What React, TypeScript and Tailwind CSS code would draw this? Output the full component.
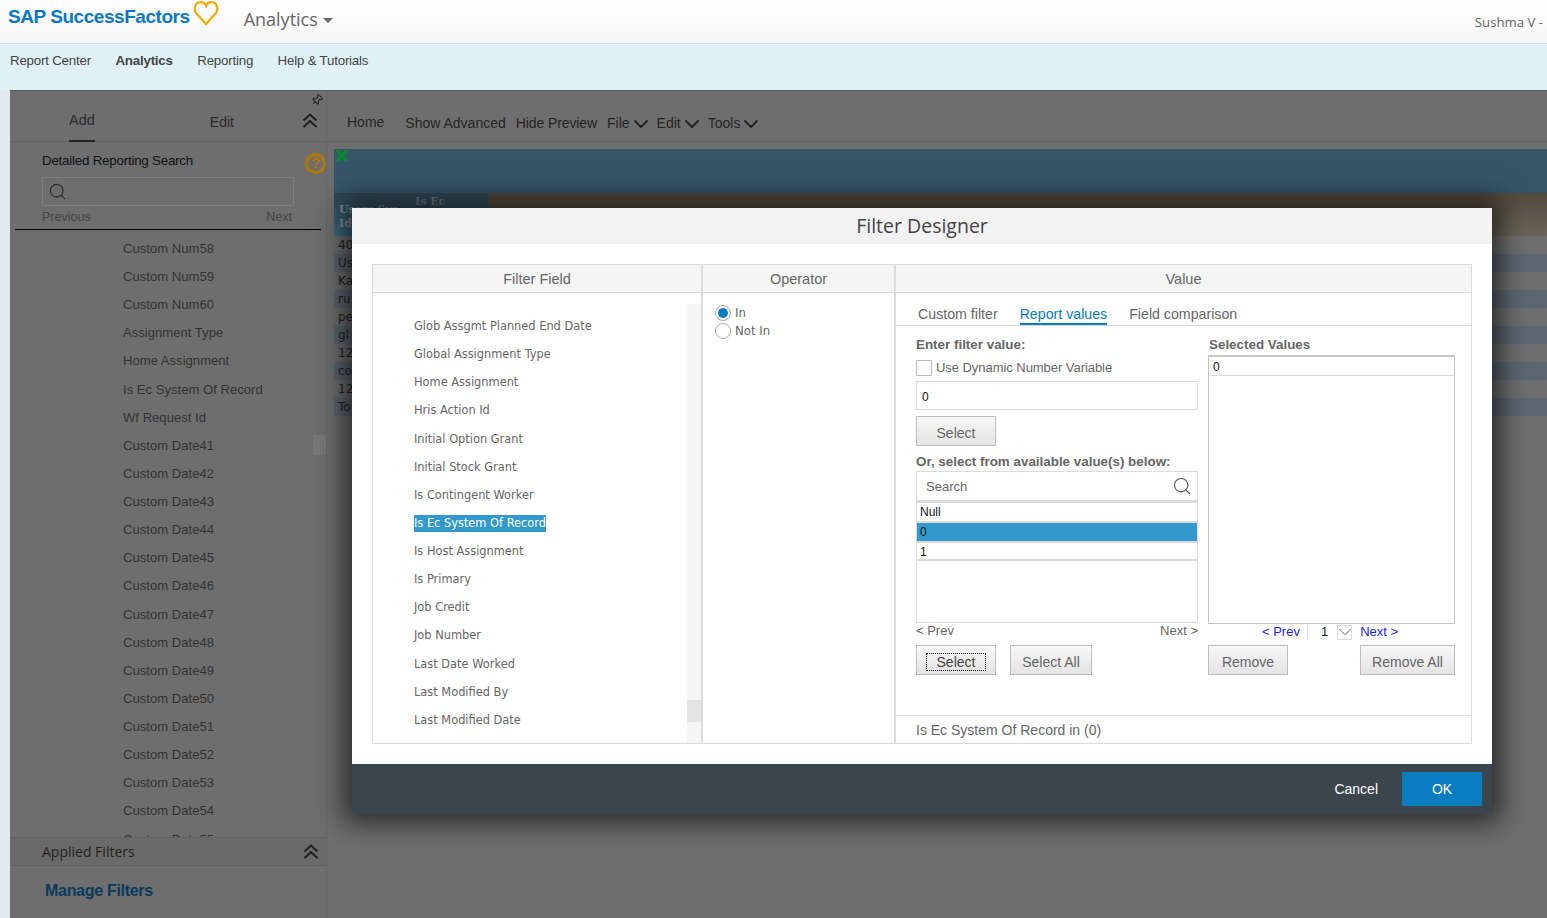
import React from "react";
import { Pin, ChevronDown, Search } from "lucide-react";

const sideFields = [
  "Custom Num58", "Custom Num59", "Custom Num60", "Assignment Type", "Home Assignment",
  "Is Ec System Of Record", "Wf Request Id", "Custom Date41", "Custom Date42", "Custom Date43",
  "Custom Date44", "Custom Date45", "Custom Date46", "Custom Date47", "Custom Date48",
  "Custom Date49", "Custom Date50", "Custom Date51", "Custom Date52", "Custom Date53",
  "Custom Date54", "Custom Date55",
];

const filterFields = [
  "Glob Assgmt Planned End Date", "Global Assignment Type", "Home Assignment", "Hris Action Id",
  "Initial Option Grant", "Initial Stock Grant", "Is Contingent Worker", "Is Ec System Of Record",
  "Is Host Assignment", "Is Primary", "Job Credit", "Job Number", "Last Date Worked",
  "Last Modified By", "Last Modified Date",
];

const rowStubs = ["40", "Us", "Ka", "ru", "pe", "gl", "12", "co", "12", "To"];

const DoubleUp = ({ className = "" }: { className?: string }) => (
  <svg viewBox="0 0 16 15" className={`h-[15px] w-[16px] ${className}`} fill="none" stroke="#1f1f1f" strokeWidth="2">
    <path d="M1.5 7.5 L8 1.5 L14.5 7.5" />
    <path d="M1.5 14 L8 8 L14.5 14" />
  </svg>
);

const GrayButton = ({ label, className = "", focused = false }: { label: string; className?: string; focused?: boolean }) => (
  <button
    className={`h-[30px] border border-[#bdbdbd] bg-gradient-to-b from-[#f7f7f7] to-[#e4e4e4] pt-[4px] text-[14px] leading-[16px] text-[#666] ${className}`}
  >
    {focused ? <span className="border border-dotted border-black px-[10px] text-[#444]">{label}</span> : label}
  </button>
);

const MenuItem = ({ label }: { label: string }) => (
  <span className="flex items-center">
    {label}
    <ChevronDown size={24} strokeWidth={1.8} className="-my-[4px] -ml-[1px] text-[#222]" />
  </span>
);

export default function App() {
  return (
    <div className="relative h-[918px] w-[1547px] overflow-hidden bg-[#e0eaf0] font-['Liberation_Sans',sans-serif]">
      <header className="flex h-[44px] items-center border-b border-[#dcdcdc] bg-gradient-to-b from-white to-[#f6f6f6] pl-[8px] pr-[4px]">
        <span className="mb-[8px] text-[19px] font-bold tracking-[-0.45px] text-[#0a77c5]">SAP SuccessFactors</span>
        <svg viewBox="0 0 26 26" className="mb-[17px] ml-[3px] h-[26px] w-[26px]" fill="none" stroke="#f0ab00" strokeWidth="2.2">
          <path d="M13 24 L3.5 13.5 C0 9 2 2.5 7.5 2.2 C10 2 12 3.5 13 6 C14 3.5 16 2 18.5 2.2 C24 2.5 26 9 22.5 13.5 Z" />
        </svg>
        <span className="ml-[25px] mb-[5px] font-['Open_Sans',sans-serif] text-[18px] text-[#666]">Analytics</span>
        <span className="mb-[3px] ml-[5px] h-0 w-0 border-x-[5px] border-t-[5px] border-x-transparent border-t-[#666]" />
        <span className="ml-auto mt-[3px] font-['Open_Sans',sans-serif] text-[13.2px] text-[#666]">Sushma V -</span>
      </header>

      <nav className="flex h-[46px] gap-[24.5px] bg-[#e0f1f5] pl-[10px] pt-[7px] text-[13.3px] tracking-[-0.2px] text-[#444]">
        <span>Report Center</span>
        <span className="font-bold">Analytics</span>
        <span>Reporting</span>
        <span>Help &amp; Tutorials</span>
      </nav>

      <main className="ml-[10px] flex h-[828px] border-t border-[#5a5a5a] bg-[#6e6e6e]">
        <aside className="flex w-[317px] shrink-0 flex-col border-r border-[#666]">
          <div className="relative flex h-[51px] border-b border-[#636363] text-[14px] text-[#2b2b2b]">
            <span className="ml-[59px] mt-[19px] h-[32px] border-b-2 border-[#222] text-[14.5px]">Add</span>
            <span className="ml-[115px] mt-[21px]">Edit</span>
            <Pin size={12} className="absolute right-[3px] top-[3px] rotate-45 text-[#222]" />
            <DoubleUp className="absolute right-[8px] top-[22px]" />
          </div>
          <div className="relative px-[32px] pt-[9px]">
            <div className="text-[13.3px] tracking-[-0.2px] text-[#111]">Detailed Reporting Search</div>
            <span className="absolute right-0 top-[11px] flex h-[21px] w-[21px] items-center justify-center rounded-full border-[3px] border-[#b37700] text-[15px] font-bold text-[#b37700]">?</span>
            <div className="mt-[6px] flex h-[29px] w-[252px] items-center border border-[#7d7d7d] pl-[5px]">
              <Search size={19} strokeWidth={1.5} className="text-[#2b2b2b]" />
            </div>
            <div className="mt-[2px] flex w-[250px] justify-between text-[12.5px] text-[#444]">
              <span>Previous</span>
              <span>Next</span>
            </div>
          </div>
          <div className="mx-[5px] mt-[2px] border-t border-black" />
          <div className="relative h-[607px] overflow-hidden pl-[113px] pt-[5px] text-[13.1px] text-[#333]">
            {sideFields.map((f, i) => (
              <div key={i} className="flex h-[28.14px] items-center">{f}</div>
            ))}
            <div className="absolute right-0 top-[205px] h-[20px] w-[13px] bg-[#777]" />
          </div>
          <div className="flex h-[29px] items-center justify-between border-y border-[#626262] bg-[#6a6a6a] pl-[32px] pr-[7px] font-['Open_Sans',sans-serif] text-[14px] text-[#222]">
            <span>Applied Filters</span>
            <DoubleUp />
          </div>
          <div className="pl-[35px] pt-[13px] text-[16px] font-bold tracking-[-0.3px] text-[#0a3a5c]">Manage Filters</div>
        </aside>

        <section className="flex min-w-0 flex-1 flex-col">
          <div className="flex h-[51px] items-end border-b border-[#636363] pb-[7px] pl-[20px] text-[14px] text-[#252525]">
            <span className="mb-[1px] mr-[21px]">Home</span>
            <span className="mr-[10px]">Show Advanced</span>
            <span className="mr-[10px] tracking-[-0.1px]">Hide Preview</span>
            <span className="mr-[4px]"><MenuItem label="File" /></span>
            <span className="mr-[4px]"><MenuItem label="Edit" /></span>
            <MenuItem label="Tools" />
          </div>
          <div className="ml-[7px] mt-[7px]">
            <div className="h-[44px] bg-[#365568] p-[1px]">
              <svg viewBox="0 0 14 11" className="h-[11px] w-[14px]">
                <path d="M0 0 H4.5 L7 3 L9.5 0 H14 L9.5 5.5 L14 11 H9.5 L7 8 L4.5 11 H0 L4.5 5.5 Z" fill="#0a8a2e" />
              </svg>
            </div>
            <div className="flex h-[43px] font-['DejaVu_Serif',serif] text-[11px] font-bold leading-[14px] text-[#87949c]">
              <div className="relative w-[154px] bg-gradient-to-b from-[#2f4653] to-[#3e6d85] pl-[5px] pt-[10px]">
                Users Sys
                <br />
                Id
                <span className="absolute left-[81px] top-[2px] text-[#6d7a80]">Is Ec</span>
              </div>
              <div className="flex-1 bg-gradient-to-b from-[#54493d] to-[#6a645a]" />
            </div>
            {rowStubs.map((s, i) => (
              <div key={i} className={`flex h-[18px] items-center pl-[4px] font-['DejaVu_Sans',sans-serif] text-[12px] text-[#222] ${i % 2 === 0 ? "bg-[#6e6e6e]" : "bg-[#5d6670]"}`}>
                {s}
              </div>
            ))}
          </div>
        </section>
      </main>

      <div className="absolute left-[352px] top-[208px] flex h-[606px] w-[1140px] flex-col bg-white shadow-[0_0_26px_8px_rgba(0,0,0,0.65)]">
        <div className="flex h-[36px] items-center justify-center bg-[#f2f2f2] font-['Open_Sans',sans-serif] text-[19.5px] text-[#444]">
          Filter Designer
        </div>

        <div className="flex h-[520px] px-[20px] pt-[20px] text-[#666]">
          <div className="flex h-[480px] w-[1100px] border border-[#dcdcdc]">
            {/* filter field column */}
            <div className="relative w-[330px] border-r-2 border-[#dcdcdc]">
              <div className="flex h-[28px] items-center justify-center border-b border-[#dcdcdc] bg-[#f5f5f5] pt-[2px] text-[14.5px]">Filter Field</div>
              <div className="pl-[41px] pt-[19.5px] font-['DejaVu_Sans',sans-serif] text-[11.4px]">
                {filterFields.map((f) => (
                  <div key={f} className="flex h-[28.13px] items-center">
                    <span className={f === "Is Ec System Of Record" ? "bg-[#3399cc] text-white leading-[17px]" : ""}>{f}</span>
                  </div>
                ))}
              </div>
              <div className="absolute bottom-0 right-0 top-[39px] w-[14px] bg-[#f5f5f5]">
                <div className="mt-[396px] h-[22px] bg-[#e4e4e4]" />
              </div>
            </div>

            {/* operator column */}
            <div className="w-[193px] border-r-2 border-[#dcdcdc]">
              <div className="flex h-[28px] items-center justify-center border-b border-[#dcdcdc] bg-[#f5f5f5] pt-[2px] text-[14.5px]">Operator</div>
              <div className="pl-[12px] pt-[11px] font-['DejaVu_Sans',sans-serif] text-[11.7px]">
                <div className="flex h-[18px] items-center gap-[4px]">
                  <span className="flex h-[16px] w-[16px] items-center justify-center rounded-full border border-[#aaa]">
                    <span className="h-[10px] w-[10px] rounded-full bg-[#0a7cc0]" />
                  </span>
                  <span className="pt-px">In</span>
                </div>
                <div className="flex h-[18px] items-center gap-[4px]">
                  <span className="h-[16px] w-[16px] rounded-full border border-[#aaa]" />
                  <span className="pt-px">Not In</span>
                </div>
              </div>
            </div>

            {/* value column */}
            <div className="flex flex-1 flex-col">
              <div className="flex h-[28px] items-center justify-center border-b border-[#dcdcdc] bg-[#f5f5f5] pt-[2px] text-[14.5px]">Value</div>
              <div className="flex h-[33px] items-end gap-[22px] border-b border-[#dcdcdc] pl-[22px] text-[14.2px] leading-[16px]">
                <span className="pb-[3px]">Custom filter</span>
                <span className="border-b-2 border-[#0a7cc0] pb-[1px] text-[#0a7cc0]">Report values</span>
                <span className="pb-[3px]">Field comparison</span>
              </div>

              <div className="flex flex-1 gap-[10px] pl-[20px] pt-[10px]">
                <div className="flex w-[282px] flex-col">
                  <div className="text-[13.4px] font-bold leading-[17px]">Enter filter value:</div>
                  <div className="mt-[5px] flex items-center gap-[4px] text-[13px] tracking-[-0.05px]">
                    <span className="h-[16px] w-[16px] rounded-[1px] border border-[#bbb]" />
                    Use Dynamic Number Variable
                  </div>
                  <div className="mt-[3px] flex h-[29px] items-center border border-[#dcdcdc] pl-[5px] pt-[3px] text-[12px] text-[#111]">0</div>
                  <GrayButton label="Select" className="mt-[6px] w-[80px]" />
                  <div className="mt-[7px] text-[13.4px] font-bold leading-[17px]">Or, select from available value(s) below:</div>
                  <div className="mt-[1px] flex h-[30px] items-center justify-between border border-[#dcdcdc] pl-[9px] pr-[5px] text-[13px]">
                    <span className="pt-[2px]">Search</span>
                    <Search size={20} strokeWidth={1.4} className="text-[#555]" />
                  </div>
                  <div className="h-[122px] border border-t-2 border-[#dcdcdc] text-[12px] text-[#111]">
                    <div className="flex h-[20px] items-center border-b-2 border-[#dcdcdc] pl-[3px]">Null</div>
                    <div className="flex h-[18px] items-center bg-[#3399cc] pl-[3px]">0</div>
                    <div className="flex h-[20px] items-center border-y-2 border-[#dcdcdc] pl-[3px] pt-[2px]">1</div>
                  </div>
                  <div className="flex h-[17px] items-center justify-between text-[13px]">
                    <span>&lt; Prev</span>
                    <span>Next &gt;</span>
                  </div>
                  <div className="mt-[5px] flex gap-[14px]">
                    <GrayButton label="Select" focused className="w-[80px]" />
                    <GrayButton label="Select All" className="w-[82px]" />
                  </div>
                </div>

                <div className="flex w-[247px] flex-col">
                  <div className="pl-px text-[13.4px] font-bold leading-[17px]">Selected Values</div>
                  <div className="mt-[2px] h-[269px] border border-[#c4c4c4] border-t-2">
                    <div className="flex h-[19px] items-center border-b border-[#dcdcdc] pl-[4px] pt-px text-[12px] text-[#111]">0</div>
                  </div>
                  <div className="flex h-[17px] items-center pb-px pl-[54px] text-[13px] text-[#1d1df0]">
                    <span>&lt; Prev</span>
                    <span className="ml-[7px] h-[16px] border-l border-[#dcdcdc] pl-[13px] leading-[16px] text-[#222]">1</span>
                    <span className="ml-[9px] flex h-[15px] w-[15px] items-center justify-center border border-[#dcdcdc]">
                      <ChevronDown size={22} strokeWidth={1} className="shrink-0 text-[#555]" />
                    </span>
                    <span className="ml-[8px]">Next &gt;</span>
                  </div>
                  <div className="mt-[4px] flex justify-between">
                    <GrayButton label="Remove" className="w-[80px]" />
                    <GrayButton label="Remove All" className="w-[95px]" />
                  </div>
                </div>
              </div>

              <div className="flex h-[28px] items-center border-t border-[#dcdcdc] pl-[20px] pt-px text-[14px]">Is Ec System Of Record in (0)</div>
            </div>
          </div>
        </div>

        <div className="flex h-[50px] items-center justify-end bg-[#3d454c] pr-[10px] text-[14px] text-white">
          <span className="mr-[24px] pt-px">Cancel</span>
          <button className="mb-px h-[34px] w-[80px] bg-[#0a7cc0] pt-[2px]">OK</button>
        </div>
      </div>
    </div>
  );
}
